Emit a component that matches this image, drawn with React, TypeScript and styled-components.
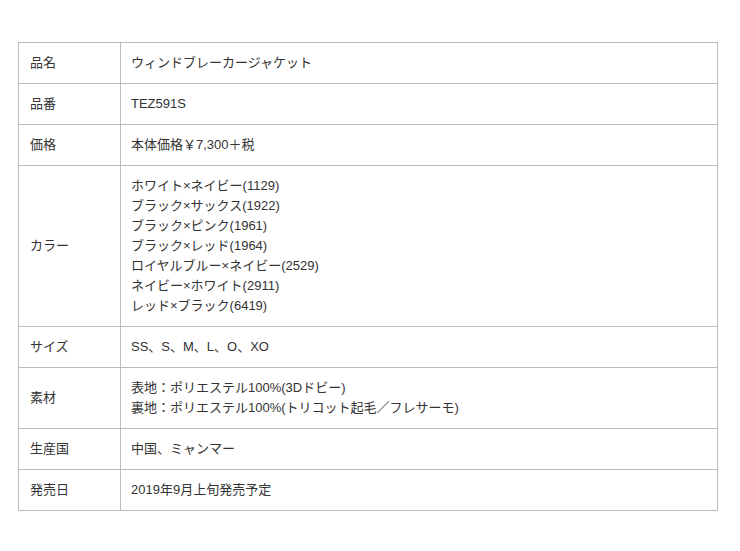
import styled, { createGlobalStyle } from "styled-components";

const specs: { label: string; lines: string[] }[] = [
  { label: "品名", lines: ["ウィンドブレーカージャケット"] },
  { label: "品番", lines: ["TEZ591S"] },
  { label: "価格", lines: ["本体価格￥7,300＋税"] },
  {
    label: "カラー",
    lines: [
      "ホワイト×ネイビー(1129)",
      "ブラック×サックス(1922)",
      "ブラック×ピンク(1961)",
      "ブラック×レッド(1964)",
      "ロイヤルブルー×ネイビー(2529)",
      "ネイビー×ホワイト(2911)",
      "レッド×ブラック(6419)",
    ],
  },
  { label: "サイズ", lines: ["SS、S、M、L、O、XO"] },
  {
    label: "素材",
    lines: [
      "表地：ポリエステル100%(3Dドビー)",
      "裏地：ポリエステル100%(トリコット起毛／フレサーモ)",
    ],
  },
  { label: "生産国", lines: ["中国、ミャンマー"] },
  { label: "発売日", lines: ["2019年9月上旬発売予定"] },
];

export default function App() {
  return (
    <>
      <GlobalStyle />
      <Page>
        <SpecTable>
          <colgroup>
            <col style={{ width: 102 }} />
            <col />
          </colgroup>
          <tbody>
            {specs.map((row) => (
              <tr key={row.label}>
                <Label>{row.label}</Label>
                <Value>
                  {row.lines.map((line) => (
                    <Line key={line}>{line}</Line>
                  ))}
                </Value>
              </tr>
            ))}
          </tbody>
        </SpecTable>
      </Page>
    </>
  );
}

const GlobalStyle = createGlobalStyle`
  body {
    margin: 0;
    background: #ffffff;
    font-family: "Liberation Sans", "Noto Sans CJK JP", sans-serif;
  }
`;

const Page = styled.div`
  padding: 42px 0 0 18px;
`;

const SpecTable = styled.table`
  width: 700px;
  border-collapse: collapse;
  table-layout: fixed;
  font-size: 13px;
  line-height: 20px;
  color: #333333;
`;

const Label = styled.td`
  border: 1px solid #bbbbbb;
  padding: 10px 11px;
  vertical-align: middle;
`;

const Value = styled.td`
  border: 1px solid #bbbbbb;
  padding: 10px 10px;
  vertical-align: middle;
`;

const Line = styled.div`
  white-space: nowrap;
`;
